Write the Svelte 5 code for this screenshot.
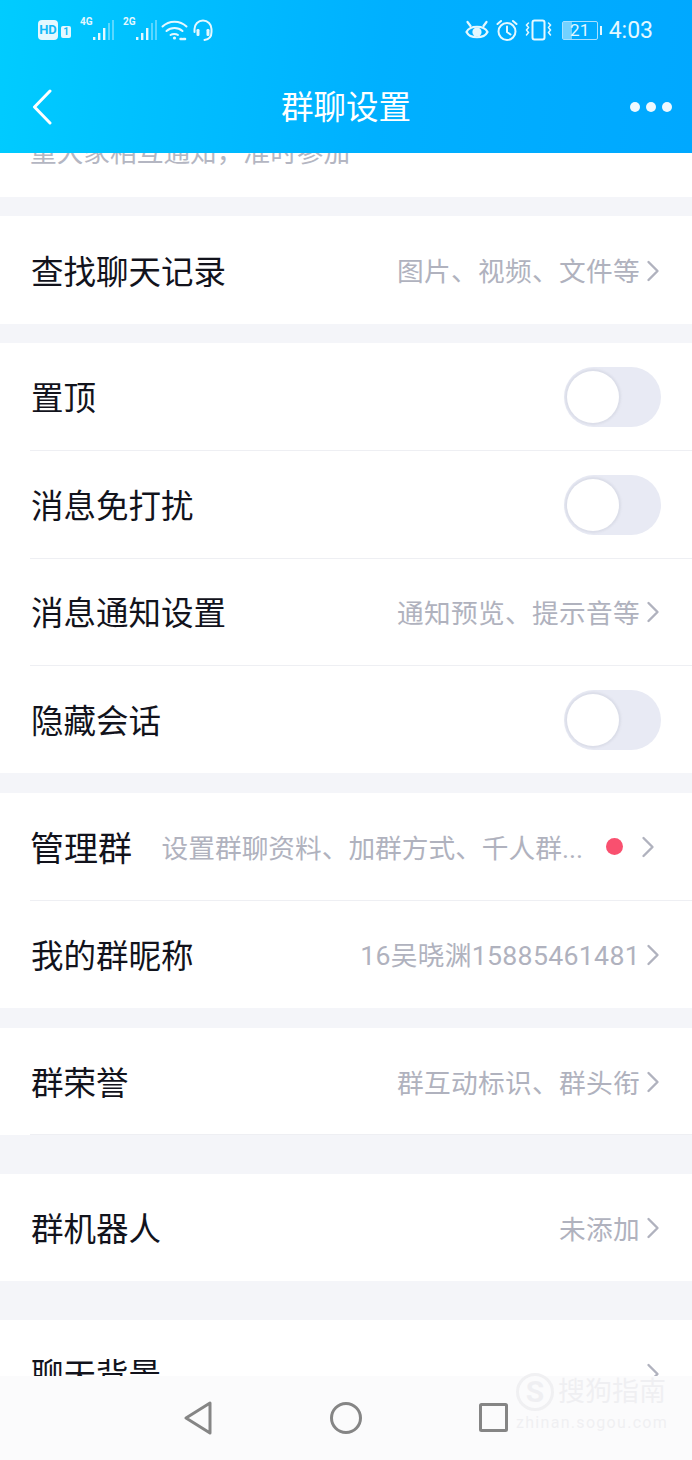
<script lang="ts">
  type Row = { label: string; value?: string; toggle?: boolean; dot?: boolean };

  const groups: { rows: Row[]; gap: string; lastLine?: boolean }[] = [
    { gap: 'g19', rows: [{ label: '查找聊天记录', value: '图片、视频、文件等' }] },
    {
      gap: 'g19',
      rows: [
        { label: '置顶', toggle: true },
        { label: '消息免打扰', toggle: true },
        { label: '消息通知设置', value: '通知预览、提示音等' },
        { label: '隐藏会话', toggle: true }
      ]
    },
    {
      gap: 'g20',
      rows: [
        { label: '管理群', value: '设置群聊资料、加群方式、千人群...', dot: true },
        { label: '我的群昵称', value: '16吴晓渊15885461481' }
      ]
    },
    { gap: 'g20', lastLine: true, rows: [{ label: '群荣誉', value: '群互动标识、群头衔' }] },
    { gap: 'g39', rows: [{ label: '群机器人', value: '未添加' }] },
    { gap: 'g39', rows: [{ label: '聊天背景', value: ' ' }] }
  ];
</script>

<div class="phone">
  <header class="top">
    <div class="status">
      <div class="status-left">
        <span class="hd">HD</span>
        <span class="sim">1</span>
        <span class="net"><i>4G</i>
          <svg width="24" height="24" viewBox="0 0 24 24" fill="currentColor">
            <rect x="1" y="18" width="2.4" height="3" /><rect x="6" y="14" width="2.4" height="7" /><rect x="11" y="9" width="2.4" height="12" /><rect x="16" y="4" width="2" height="17" opacity=".4" /><rect x="20" y="1" width="2" height="20" opacity=".4" />
          </svg>
        </span>
        <span class="net"><i>2G</i>
          <svg width="24" height="24" viewBox="0 0 24 24" fill="currentColor">
            <rect x="1" y="18" width="2.4" height="3" /><rect x="6" y="14" width="2.4" height="7" /><rect x="11" y="9" width="2.4" height="12" /><rect x="16" y="4" width="2" height="17" opacity=".4" /><rect x="20" y="1" width="2" height="20" opacity=".4" />
          </svg>
        </span>
        <svg class="wifi" width="27" height="22" viewBox="0 0 27 22" fill="none" stroke="currentColor" stroke-width="2" stroke-linecap="round">
          <path d="M1.5 7.5 C8 1 19 1 25.5 7.5" />
          <path d="M5.5 12 C10 8 17 8 21.5 12" />
          <path d="M9.5 16 C11.5 14.5 15 14.5 17 16" />
          <circle cx="13.5" cy="19" r="1.6" fill="currentColor" stroke="none" />
          <path d="M19.5 20 h5" stroke-width="2.4" stroke-dasharray="1.5 1.6" />
        </svg>
        <svg class="phones" width="22" height="23" viewBox="0 0 22 23" fill="none" stroke="currentColor" stroke-width="2" stroke-linecap="round">
          <path d="M2.5 13 V10 a8.5 8.5 0 0 1 17 0 V13 c0 5 -3 7.5 -7 8" />
          <rect x="4.5" y="10" width="3" height="7" rx="1.2" fill="currentColor" stroke="none" />
          <rect x="14.5" y="10" width="3" height="7" rx="1.2" fill="currentColor" stroke="none" />
        </svg>
      </div>
      <div class="status-right">
        <svg width="24" height="22" viewBox="0 0 24 22" fill="none" stroke="currentColor" stroke-width="2.200" stroke-linecap="round">
          <path d="M1.500 13 C5 6 19 6 22.500 13 C19 20 5 20 1.500 13 Z" />
          <circle cx="12" cy="13" r="4.600" fill="currentColor" stroke="none" />
          <path d="M2.500 3 l3 4 M21.500 3 l-3 4" />
        </svg>
        <svg width="22" height="23" viewBox="0 0 22 23" fill="none" stroke="currentColor" stroke-width="2" stroke-linecap="round">
          <circle cx="11" cy="12.500" r="8.500" />
          <path d="M11 7.500 V13 l3.500 2.500 M1.500 5 l3.500 -3 M20.500 5 l-3.500 -3" />
        </svg>
        <svg width="27" height="22" viewBox="0 0 27 22" fill="none" stroke="currentColor" stroke-width="2" stroke-linecap="round">
          <rect x="7.500" y="1.500" width="12" height="19" rx="2" />
          <path d="M3.500 4 l-2 2 l2 2.500 l-2 2.500 l2 2.500 l-2 2.500 M23.500 4 l2 2 l-2 2.500 l2 2.500 l-2 2.500 l2 2.500" stroke-width="1.500" />
        </svg>
        <span class="battery">
          <span class="cell"><span class="fill"></span><span class="pct">21</span></span>
          <span class="nub"></span>
        </span>
        <span class="time">4:03</span>
      </div>
    </div>
    <div class="bar">
      <svg class="back" width="22" height="36" viewBox="0 0 22 36" fill="none" stroke="currentColor" stroke-width="3" stroke-linecap="round" stroke-linejoin="round">
        <path d="M18 2 L2.500 18 L18 34" />
      </svg>
      <h1>群聊设置</h1>
      <div class="more"><span></span><span></span><span></span></div>
    </div>
  </header>

  <main class="list">
    <div class="peek"><p>重大家相互通知，准时参加</p></div>
    {#each groups as group}
      <div class="gap {group.gap}"></div>
      <section class="group" class:line-after={group.lastLine}>
        {#each group.rows as row}
          <div class="row" class:has-dot={row.dot}>
            <span class="label">{row.label}</span>
            {#if row.toggle}
              <span class="switch"><span class="knob"></span></span>
            {:else}
              <span class="value">{row.value}</span>
              {#if row.dot}<span class="dot"></span>{/if}
              <svg class="chev" width="14" height="22" viewBox="0 0 14 22" fill="none" stroke="currentColor" stroke-width="2.400" stroke-linecap="round" stroke-linejoin="round">
                <path d="M2.500 2 L11.500 11 L2.500 20" />
              </svg>
            {/if}
          </div>
        {/each}
      </section>
    {/each}
  </main>

  <nav class="softkeys">
    <svg width="30" height="34" viewBox="0 0 30 34" fill="none" stroke="currentColor" stroke-width="3" stroke-linejoin="round">
      <path d="M27 2 V32 L3 17 Z" />
    </svg>
    <svg width="32" height="32" viewBox="0 0 32 32" fill="none" stroke="currentColor" stroke-width="3">
      <circle cx="16" cy="16" r="14.500" />
    </svg>
    <svg width="30" height="30" viewBox="0 0 30 30" fill="none" stroke="currentColor" stroke-width="3" stroke-linejoin="round">
      <rect x="1.500" y="1.500" width="26" height="26" rx="1" />
    </svg>
    <div class="mark">
      <div class="mark-top">
        <span class="mark-s">S</span>
        <span class="mark-name">搜狗指南</span>
      </div>
      <span class="mark-url">zhinan.sogou.com</span>
    </div>
  </nav>
</div>

<style>
  :global(body) {
    margin: 0;
    background: #f4f5f9;
  }

  .phone {
    position: relative;
    width: 692px;
    height: 1460px;
    overflow: hidden;
    font-family: Roboto, "Noto Sans CJK SC", sans-serif;
    background: #f4f5f9;
  }

  /* header */
  .top {
    height: 153px;
    color: #fff;
    background: linear-gradient(96deg, #00ccff 0%, #00c0ff 22%, #00b0ff 55%, #00a8ff 100%);
  }

  .status {
    height: 60px;
    display: flex;
    justify-content: space-between;
    align-items: center;
    padding: 0 39px 2px 38px;
    color: #e4f8ff;
  }

  .status-left,
  .status-right {
    display: flex;
    align-items: center;
  }

  .status-right {
    gap: 7px;
  }

  .hd {
    width: 20px;
    height: 20px;
    line-height: 20px;
    border-radius: 4px;
    background: #e4f8ff;
    color: #10b8f8;
    font-size: 13px;
    font-weight: 700;
    text-align: center;
  }

  .sim {
    margin: 4px 0 0 3px;
    width: 10px;
    height: 12px;
    line-height: 12px;
    border-radius: 2px;
    background: #e4f8ff;
    color: #10b8f8;
    font-size: 10px;
    font-weight: 700;
    text-align: center;
  }

  .net {
    display: flex;
    align-items: flex-start;
    margin-left: 9px;
  }

  .net + .net {
    margin-left: 7px;
  }

  .net i {
    font-style: normal;
    font-size: 10px;
    font-weight: 700;
    line-height: 12px;
    width: 14px;
    margin-top: -2px;
  }

  .net svg {
    margin-left: -2px;
    margin-top: 1px;
  }

  .wifi {
    margin-left: 2px;
  }

  .phones {
    margin-left: 4px;
  }

  .battery {
    display: flex;
    align-items: center;
    gap: 2px;
    margin-left: 3px;
  }

  .cell {
    position: relative;
    display: block;
    width: 34px;
    height: 17px;
    border: 1.5px solid #a8e0ff;
    border-radius: 2px;
    overflow: hidden;
  }

  .fill {
    position: absolute;
    left: 0;
    top: 0;
    bottom: 0;
    width: 9px;
    background: rgba(255, 255, 255, 0.45);
  }

  .pct {
    position: relative;
    display: block;
    text-align: center;
    font-size: 17px;
    line-height: 17px;
  }

  .nub {
    width: 2px;
    height: 9px;
    background: #e4f8ff;
  }

  .time {
    font-size: 23px;
  }

  .bar {
    position: relative;
    height: 93px;
    display: flex;
    align-items: center;
    justify-content: center;
    padding-bottom: 1px;
  }

  .back {
    position: absolute;
    left: 32px;
    top: 27px;
  }

  h1 {
    margin: 0;
    font-size: 32.500px;
    font-weight: 400;
    line-height: 1;
  }

  .more {
    position: absolute;
    right: 20px;
    top: 40px;
    display: flex;
    gap: 6px;
  }

  .more span {
    width: 10px;
    height: 10px;
    border-radius: 50%;
    background: #eef9ff;
  }

  /* list */
  .peek {
    height: 44px;
    overflow: hidden;
    background: #fff;
  }

  .peek p {
    margin: -18px 0 0 30px;
    font-size: 26.700px;
    line-height: 36px;
    color: #b4b6c2;
  }

  .gap {
    background: #f4f5f9;
  }

  .g19 {
    height: 19px;
  }

  .g20 {
    height: 20px;
  }

  .g39 {
    height: 38.500px;
  }

  .group {
    background: #fff;
  }

  .row {
    position: relative;
    height: 107.500px;
    display: flex;
    align-items: center;
    padding: 0 32px 0 31px;
    box-sizing: border-box;
  }

  .row + .row::before,
  .line-after .row::after {
    content: "";
    position: absolute;
    left: 30px;
    right: 0;
    top: 0;
    height: 1px;
    background: #eeeff3;
  }

  .line-after .row::after {
    top: auto;
    bottom: 0;
  }

  .label {
    flex: none;
    margin-top: 6px;
    font-size: 32.500px;
    line-height: 1;
    color: #12131c;
    white-space: nowrap;
  }

  .has-dot {
    padding-left: 30px;
    padding-right: 37px;
  }

  .has-dot .label {
    font-size: 34px;
  }

  .value {
    flex: 1;
    min-width: 0;
    margin-top: 6px;
    text-align: right;
    font-size: 26.700px;
    letter-spacing: 0.300px;
    line-height: 1;
    color: #b0b2be;
    white-space: nowrap;
  }

  .has-dot .value {
    letter-spacing: 0;
  }

  .chev {
    flex: none;
    margin-left: 6px;
    margin-top: 2px;
    color: #b0b2be;
  }

  .dot {
    flex: none;
    width: 17px;
    height: 17px;
    margin-left: 23px;
    margin-right: 12px;
    border-radius: 50%;
    background: #f9506f;
  }

  .switch {
    margin-left: auto;
    margin-right: -1px;
    margin-top: 2px;
    position: relative;
    width: 97px;
    height: 60px;
    border-radius: 30px;
    background: #e8eaf4;
  }

  .knob {
    position: absolute;
    left: 3px;
    top: 4px;
    width: 52px;
    height: 52px;
    border-radius: 50%;
    background: #fff;
    box-shadow: 0 0 2px 2px rgba(190, 192, 205, 0.3);
  }

  /* android soft keys, sits over the scrolled list */
  .softkeys {
    position: absolute;
    left: 0;
    right: 0;
    bottom: 0;
    height: 84px;
    background: #fbfbfc;
    color: #858585;
    display: flex;
    align-items: center;
    justify-content: center;
    gap: 117px;
    padding-bottom: 1px;
    box-sizing: border-box;
  }

  .mark {
    position: absolute;
    left: 516px;
    top: -3px;
    width: 160px;
    color: rgba(236, 236, 239, 0.75);
  }

  .mark-top {
    display: flex;
    align-items: center;
  }

  .mark-s {
    width: 32px;
    height: 32px;
    border: 3px solid rgba(236, 236, 239, 0.75);
    border-radius: 50%;
    font-size: 30px;
    font-weight: 700;
    line-height: 32px;
    text-align: center;
  }

  .mark-name {
    margin-left: 4px;
    font-size: 27px;
    line-height: 34px;
    white-space: nowrap;
  }

  .mark-url {
    display: block;
    font-size: 16px;
    letter-spacing: 1.300px;
    line-height: 20px;
    margin-top: 2px;
    white-space: nowrap;
  }
</style>
